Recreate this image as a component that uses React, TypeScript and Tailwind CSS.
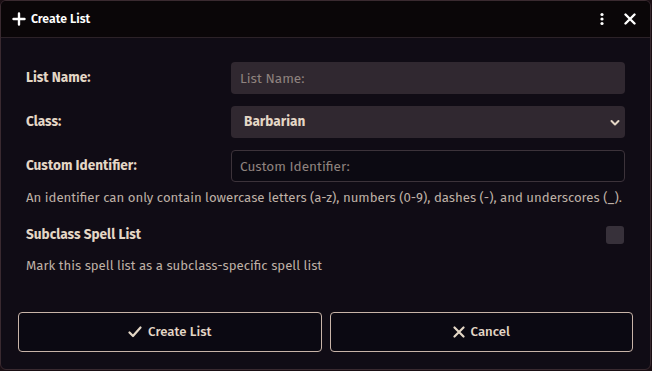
import React from 'react';

const font = { fontFamily: '"Fira Sans", Roboto, "Noto Sans", sans-serif' };

function Row({ label, children }: { label: string; children: React.ReactNode }) {
  return (
    <div className="flex items-center h-8">
      <label className="w-[205px] shrink-0 text-[13.6px] font-bold text-[#e4d7c6]">{label}</label>
      <div className="flex-1">{children}</div>
    </div>
  );
}

export default function App() {
  return (
    <div className="w-[652px] h-[371px] bg-[#1a0f14] overflow-hidden" style={font}>
      <div className="w-[651px] h-[370px] rounded-md border border-[#3a2a30] bg-[#100c15] flex flex-col overflow-hidden">
        <div className="h-[37px] shrink-0 flex items-center px-[11px] bg-[#0a0608] border-b border-[#2c2228]">
          <svg width="14" height="14" viewBox="0 0 14 14" className="mr-[5px]">
            <path d="M7 1.5v11M1.5 7h11" stroke="#ffffff" strokeWidth="2.4" strokeLinecap="round" />
          </svg>
          <span className="text-[12.3px] font-semibold text-white">Create List</span>
          <div className="flex-1" />
          <svg width="6" height="14" viewBox="0 0 6 14" className="mr-[19px]">
            <circle cx="3" cy="2.5" r="1.6" fill="#fff" />
            <circle cx="3" cy="7" r="1.6" fill="#fff" />
            <circle cx="3" cy="11.5" r="1.6" fill="#fff" />
          </svg>
          <svg width="12" height="12" viewBox="0 0 12 12" className="mr-[3px]">
            <path d="M1.5 1.5l9 9M10.5 1.5l-9 9" stroke="#fff" strokeWidth="2.4" strokeLinecap="round" />
          </svg>
        </div>

        <div className="flex-1 px-[25px] pt-[24px] flex flex-col">
          <Row label="List Name:">
            <input
              placeholder="List Name:"
              className="w-full h-8 rounded-[4px] bg-[#302830] px-[9px] text-[13.6px] text-[#e4d7c6] placeholder:text-[#8f837f] outline-none"
            />
          </Row>
          <div className="h-3" />
          <Row label="Class:">
            <div className="relative w-full h-8 rounded-[4px] bg-[#302830] flex items-center px-[13px]">
              <span className="text-[13.6px] font-bold text-[#e4d7c6]">Barbarian</span>
              <svg width="10" height="8" viewBox="0 0 10 8" className="absolute right-[5px] top-[13px]">
                <path d="M1.5 2l3.5 3.5L8.5 2" stroke="#e4d7c6" strokeWidth="2" fill="none" strokeLinecap="round" strokeLinejoin="round" />
              </svg>
            </div>
          </Row>
          <div className="h-3" />
          <Row label="Custom Identifier:">
            <input
              placeholder="Custom Identifier:"
              className="w-full h-8 rounded-[4px] border border-[#3c333a] bg-[#0c0a12] px-[8px] text-[13.6px] text-[#e4d7c6] placeholder:text-[#8f837f] outline-none"
            />
          </Row>
          <p className="mt-[6px] text-[13.2px] leading-[20px] whitespace-nowrap text-[#bfb1a6]">
            An identifier can only contain lowercase letters (a-z), numbers (0-9), dashes (-), and underscores (_).
          </p>
          <div className="mt-[15px] flex items-center h-[24px]">
            <span className="flex-1 text-[13.6px] font-bold text-[#e4d7c6]">Subclass Spell List</span>
            <div className="w-[18px] h-[18px] rounded-[3px] bg-[#37313a] mr-[1px]" />
          </div>
          <p className="mt-[9px] text-[13.2px] leading-[20px] text-[#bfb1a6]">
            Mark this spell list as a subclass-specific spell list
          </p>
        </div>

        <div className="flex gap-[8px] px-[17px] pb-[17px]">
          <button className="flex-1 h-[40px] rounded-[4px] border border-[#c8b4a8] bg-[#0b0912] flex items-center justify-center gap-[6px] text-[13.2px] font-medium text-[#e4d7c6]">
            <svg width="14" height="12" viewBox="0 0 14 12">
              <path d="M1.5 6.5l3.5 3.5L12.5 1.5" stroke="#e4d7c6" strokeWidth="2.2" fill="none" strokeLinecap="round" strokeLinejoin="round" />
            </svg>
            Create List
          </button>
          <button className="flex-1 h-[40px] rounded-[4px] border border-[#c8b4a8] bg-[#0b0912] flex items-center justify-center gap-[6px] text-[13.2px] font-medium text-[#e4d7c6]">
            <svg width="12" height="12" viewBox="0 0 12 12">
              <path d="M1.5 1.5l9 9M10.5 1.5l-9 9" stroke="#e4d7c6" strokeWidth="2.2" strokeLinecap="round" />
            </svg>
            Cancel
          </button>
        </div>
      </div>
    </div>
  );
}
